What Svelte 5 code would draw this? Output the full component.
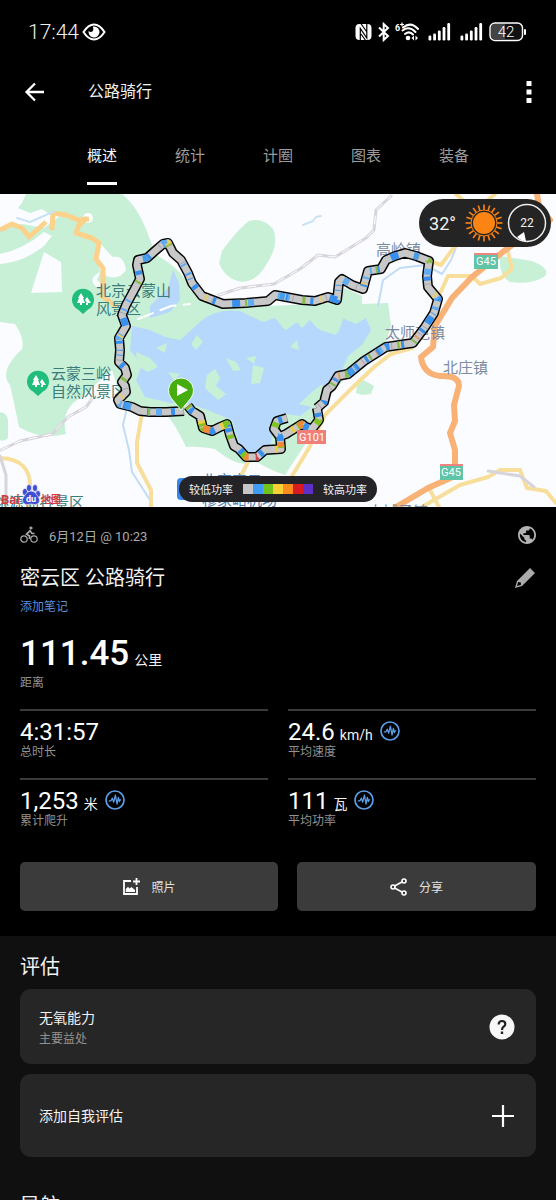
<script>
  const tabs = ['概述', '统计', '计圈', '图表', '装备'];
  let active = $state('概述');

  const legend = ['#c5c5c8', '#3f9cf5', '#71c31c', '#f8d035', '#fb8b1e', '#d91a1e', '#5e2fc9'];

  const stats = [
    { value: '4:31:57', unit: '', label: '总时长', insight: false },
    { value: '24.6', unit: 'km/h', label: '平均速度', insight: true },
    { value: '1,253', unit: '米', label: '累计爬升', insight: true },
    { value: '111', unit: '瓦', label: '平均功率', insight: true }
  ];

  const calmRoute =
    'M184 411L166 412L150 412L140 411L132 407L120 404L118 400L126 392L125 386L122 382L127 375L125 368L119 362L120 350L119 338L126 326L122 315L126 305L133 292L140 279L137 265L138 260L147 258L156 250L163 244L168 243L173 253L181 260L188 273L192 283L202 296L223 304L246 303L268 301L275 295L302 300L315 301L328 297L337 300L339 282L342 279L352 285L363 289L368 271L381 269L386 260L395 256L405 253L416 256L429 261L427 276L428 287L438 299L434 313L425 327L413 343L406 344L386 347L375 354L364 361L348 374L338 376L332 386L327 390L324 402L317 408';
  const busyRoute =
    'M317 408L319 420L312 429L306 427L302 424L286 434L279 437M287 418L277 421L274 429L280 437L281 449L265 450L257 457L246 457L239 449L234 446L230 435L227 424L220 427L212 431L203 428L200 416L192 411L188 406';

  const calmLayers = [
    ['#a6a9af', '1 33 1 49'],
    ['#3790ee', '0 9 4 21 3 17 8 39'],
    ['#62acf2', '0 22 6 26 2 8 2 51'],
    ['#87bc47', '0 34 2 58 3 71'],
    ['#e8cd6c', '0 74 2 66 2 43'],
    ['#469de9', '0 55 5 63 1 4 1 47']
  ];
  const hillLayers = [
    ['#dda064', '0 12 2 31'],
    ['#3992ea', '0 3 3 20'],
    ['#80b951', '0 17 2 29'],
    ['#b39cb8', '0 8 1 24']
  ];
  const busyLayers = [
    ['#3790ee', '0 5 4 18 6 22'],
    ['#7fc422', '0 12 5 19 4 27'],
    ['#f08a35', '0 34 5 37 4 23'],
    ['#eccf44', '0 44 3 31'],
    ['#d24450', '0 67 2 88']
  ];
  const hillRoute = 'M425 327L413 343L406 344L386 347L375 354L364 361L348 374L338 376L332 386L327 390L324 402L317 408';
  const startRoute = 'M230 437L227 424L220 427L212 431L203 428L200 416L192 411L188 406';
</script>

{#snippet pulse()}
  <svg class="pulse" viewBox="0 0 20 20" aria-hidden="true">
    <circle cx="10" cy="10" r="9" fill="none" stroke="#5c9fe8" stroke-width="1.7" />
    <path d="M3.8 10.8H6L7.3 8.2L8.7 12.2L10.4 5.2L12 14L13.4 7.4L14.4 11.6L15.2 9.8H16.2" fill="none" stroke="#5c9fe8" stroke-width="1.3" stroke-linejoin="round" />
  </svg>
{/snippet}

{#snippet pin(x, y)}
  <g transform="translate({x} {y})">
    <path d="M0 14L-5 9.5A11 11 0 1 1 5 9.5Z" fill="#20bd7d" />
    <path d="M-2 -7L-5 -2H-4L-6 3H-3V5H-1V3H2L0 -2H1ZM4 -3L2 0L4 3H3V5H5V3H8L6 0Z" fill="#fff" />
  </g>
{/snippet}

<div class="app">
  <div class="status">
    <span class="clock">17:44</span>
    <svg class="eye" viewBox="0 0 24 18" aria-hidden="true">
      <path d="M1.500 9C5 3.500 8.500 1.500 12 1.500S19 3.500 22.500 9C19 14.500 15.500 16.500 12 16.500S5 14.500 1.500 9Z" fill="none" stroke="#fff" stroke-width="2" />
      <path d="M12 3.500A5.500 5.500 0 1 1 6.600 8Q9 10 10.800 8Q12 6 10.800 3.700Z" fill="#fff" />
    </svg>
    <svg class="signals" viewBox="355 20 172 24" aria-hidden="true">
      <rect x="355.500" y="24" width="16" height="16" rx="4" fill="#fff" />
      <path d="M360.300 41V28.500L366.800 38V23M360.500 23L366.500 31.500M361 34L366 41" fill="none" stroke="#000" stroke-width="1.200" />
      <path d="M379 27.500L388 36L383.700 40V24L388 28L379 36.500" fill="none" stroke="#fff" stroke-width="2" />
      <text x="395" y="31" fill="#fff" font-size="9" font-weight="700">6</text>
      <path d="M400 24.500H404M402 22.500V26.500" stroke="#fff" stroke-width="1.200" />
      <path d="M403 27.500Q411 21 418 29M402.500 30.500Q409 25.500 415.500 32M405 34Q409.500 30.500 413 34.500" fill="none" stroke="#fff" stroke-width="2" stroke-linecap="round" />
      <circle cx="408" cy="38" r="2.300" fill="#fff" />
      <path d="M414 35.500L411.500 38L414 40.500ZM415.500 35.500L418 38L415.500 40.500Z" fill="#fff" />
      {#each [429, 461] as x}
        {#each [5, 7, 10, 13.500, 17.500] as h, i}
          <rect x={x - 0.500 + i * 4.700} y={40.500 - h} width="2.800" height={h} rx="1.200" fill="#fff" />
        {/each}
      {/each}
      <rect x="490" y="23" width="32.500" height="17.500" rx="5" fill="#111" stroke="#fff" stroke-width="1.400" />
      <path d="M495 24H505V39.500H495Q491 39.500 491 35.500V28Q491 24 495 24Z" fill="#444" />
      <rect x="524" y="29" width="2" height="6" rx="1" fill="#fff" />
      <text x="506" y="37" text-anchor="middle" fill="#fff" font-size="15" font-weight="300">42</text>
    </svg>
  </div>

  <header class="bar">
    <button class="icon" aria-label="返回">
      <svg width="22" height="22" viewBox="0 0 22 22"><path d="M20 11H3M11 2.500L2.500 11L11 19.500" fill="none" stroke="#fff" stroke-width="2.300" /></svg>
    </button>
    <h1>公路骑行</h1>
    <button class="icon more" aria-label="更多">
      <svg width="6" height="22" viewBox="0 0 6 22"><path d="M.5 0h5v5h-5zM.5 8.500h5v5h-5zM.5 17h5v5h-5z" fill="#fff" /></svg>
    </button>
  </header>

  <nav class="tabs">
    {#each tabs as tab}
      <button class:active={tab === active} onclick={() => (active = tab)}>{tab}</button>
    {/each}
  </nav>

  <main>
    <section class="map">
      <svg class="canvas" viewBox="0 194 556 313" role="img" aria-label="路线地图">
        <rect y="194" width="556" height="313" fill="#fbfcff" />
        <g fill="#c8f0d6">
          <path d="M0 194H122Q139 208 149 237L156 255Q184 270 190 290L210 305L250 307L330 303L345 288L362 296L362 304L388 303L391 325L384 350L358 368L345 378L320 408L308 440L285 475Q270 470 255 461Q240 470 215 449Q198 446 186 447Q176 425 165 413L123 405L112 370L80 398Q60 410 66 434Q40 440 19 427Q14 402 10 385Q-2 372 22 349Q20 330 0 322Z" />
          <path d="M222 251Q238 229 249 221Q263 217 273 229Q280 244 266 265Q257 281 242 282Q225 279 219 263Z" />
          <path d="M500 256Q520 259 532 261Q552 269 544 277Q530 285 510 282Q498 275 500 256Z" />
          <path d="M0 412Q9 413 8 425V438Q4 442 0 440Z" />
          <path d="M357 384L363 380L369 383L374 386L371 394L362 395L356 393Z" />
        </g>
        <g fill="#fbfcff">
          <path d="M0 194H26L22 203L18 208L30 213L42 209L52 216L60 216L44 228L22 224L0 228Z" />
          <path d="M44 252L61 262L62 292L31 293Z" />
          <path d="M0 254Q24 249 44 232L52 236L44 246Q24 262 0 264Z" />
          <circle cx="88" cy="218" r="5" />
          <path d="M96 238L106 250L113 257Q124 255 126 270Q119 281 106 276L101 270L97 280L110 292L95 286Q88 278 100 272Z" />
          <path d="M0 322L15 324Q25 338 22 350L0 350Z" />
        </g>
        <path d="M150 306L168 288L173 270L179 283L180 300L170 312L150 318Z" fill="#b7d8fb" />
        <path d="M132 326L150 330L165 337L180 340L200 322Q215 308 240 311L263 322L275 318L285 330L310 312L320 330L336 335L342 318L356 324L366 318L371 330L362 345L348 356L340 375L324 390L316 404L300 416L285 414L273 430L270 448L252 455L239 444L232 420L205 409L190 404L170 403L145 397L136 380L142 365L130 350Z" fill="#b7d8fd" />
        <g fill="#c8f0d6">
          <path d="M187 331L200 318L196 305L182 307L172 322L180 334ZM283 307L286 330L297 322L302 328L310 320L318 329L330 322L338 333L346 311ZM197 335L203 342L196 350L191 344ZM290 347L297 340L299 350ZM136 352L150 358L158 367L148 372L138 366Z" />
          <path d="M207 375L215 369L220 378L216 386L226 394L218 400L205 388ZM226 358L236 362L241 370L233 371ZM253 365L264 368L260 383L251 384ZM246 358L256 356L254 364ZM156 348L167 343L165 353ZM168 372L180 374L174 380ZM299 404L312 392L322 384L326 394L316 408Z" />
        </g>
        <path d="M0 230L12 224L22 228L29 237L46 222M52 230L53 213L66 215L78 220L89 219M87 218L79 225L76 233L92 238L99 243L96 259L103 268V297L117 307" fill="none" stroke="#fbd18b" stroke-width="5" stroke-linejoin="round" />
        <g fill="none" stroke-linecap="round" stroke-linejoin="round">
          <path d="M17 218L30 222L55 211M303 225L313 221L316 217L321 216" stroke="#c9e3f6" stroke-width="2" />
          <path d="M378 306L383 280L400 268L425 265L442 274L451 260L459 240M126 412L123 425L129 450L132 472L150 500" stroke="#c2dcf6" stroke-width="2" />
          <path d="M430 261L441 265L455 246L463 235M456 194L475 211L495 194M437 300L448 276H472L480 284L501 278L512 269L508 252M248 462L240 478M142 413L137 442V463L151 490V507M0 458Q32 459 30 490V507M412 348L391 354L374 367L350 390L325 415L309 448L292 476M422 507L460 485L488 477L500 470H520L527 488L546 491L556 503M430 490L439 507" stroke="#f7df9b" stroke-width="4" />
          <path d="M537 194L539 206L550 220L530 232L504 251L472 277L452 298L435 326L433 347L421 357Q423 374 440 376Q459 375 459 386L454 405L455 421L450 433L455 450V476L428 488L396 507" stroke="#f8b276" stroke-width="6" />
          <path d="M219 295L240 288L274 284L300 269L318 255L335 257L366 238L374 230L376 210L391 196M1 450L20 441L52 434L68 417L86 407L92 399M0 456L6 475V507M488 471L520 476L534 487" stroke="#d7d5db" stroke-width="3" />
          <path d="M219 295L240 288L274 284L300 269L318 255L335 257L366 238L374 230L376 210L391 196M1 450L20 441L52 434L68 417L86 407L92 399" stroke="#fff" stroke-width="1" stroke-dasharray="8 7" />
          <path d="M138 319L171 306L190 304" stroke="#fff" stroke-width="2" stroke-dasharray="16 8" />
        </g>

        {@render pin(83, 300)}
        {@render pin(38, 382)}
        <g font-size="15" fill="#397c7a">
          <text x="96" y="296">北京云蒙山</text>
          <text x="96" y="314">风景区</text>
          <text x="51" y="379">云蒙三峪</text>
          <text x="51" y="397">自然风景区</text>
          <text x="-6" y="508">桃源仙谷景区</text>
        </g>
        <g font-size="15" fill="#7c8ba0">
          <text x="376" y="255">高岭镇</text>
          <text x="385" y="338">太师屯镇</text>
          <text x="443" y="373">北庄镇</text>
          <text x="368" y="517">大城子镇</text>
        </g>
        <g font-size="15" fill="#4d7ab2">
          <text x="202" y="486">北京密云</text>
          <text x="202" y="505">穆家峪机场</text>
        </g>
        <rect x="177" y="478" width="22" height="22" rx="4" fill="#3686e8" />

        <g fill="none" stroke-linejoin="round">
          <g stroke="#050505" stroke-width="10">
            <path d={calmRoute} />
            <path d={busyRoute} />
          </g>
          <g stroke="#c9c8c9" stroke-width="7">
            <path d={calmRoute} />
            <path d={busyRoute} />
          </g>
          <g stroke-width="7">
            {#each calmLayers as [color, dash]}<path d={calmRoute} stroke={color} stroke-dasharray={dash} />{/each}
            {#each hillLayers as [color, dash]}<path d={hillRoute} stroke={color} stroke-dasharray={dash} />{/each}
            {#each busyLayers as [color, dash]}
              <path d={busyRoute} stroke={color} stroke-dasharray={dash} />
              <path d={startRoute} stroke={color} stroke-dasharray={dash} />
            {/each}
          </g>
        </g>
        <path d="M181 410L171 398A12.500 12.500 0 1 1 191 398Z" fill="#46ad10" stroke="#f4fff0" stroke-width="1" />
        <path d="M177 384V396L188 390Z" fill="#fff" />

        <g font-size="11" fill="#fff" text-anchor="middle">
          <rect x="474" y="253" width="24" height="16" fill="#60c4a7" />
          <rect x="474" y="253" width="24" height="2" fill="#ee8581" />
          <text x="486" y="265">G45</text>
          <rect x="440" y="464" width="23" height="16" fill="#60c4a7" />
          <rect x="440" y="464" width="23" height="2" fill="#ee8581" />
          <text x="451" y="476">G45</text>
          <rect x="297" y="430" width="29" height="14" fill="#f17f78" />
          <text x="312" y="441">G101</text>
        </g>

        <g fill="#3f4ed0" stroke="#fff" stroke-width=".6">
          <ellipse cx="25" cy="492" rx="2.600" ry="3.600" />
          <ellipse cx="29" cy="488" rx="2.500" ry="3.500" />
          <ellipse cx="35" cy="488" rx="2.500" ry="3.500" />
          <ellipse cx="38" cy="494" rx="2.500" ry="3.400" />
          <path d="M31 491Q35 491 37 495Q41 499 39 503Q36 506 31 504Q26 506 23 503Q21 499 25 495Q27 491 31 491Z" />
        </g>
        <text x="31" y="502" font-size="9" font-weight="700" fill="#fff" text-anchor="middle">du</text>
        <g font-size="13" font-weight="700" fill="#d93b43">
          <text x="1" y="504">Bai</text>
          <text x="41" y="503" font-size="10">地图</text>
        </g>
      </svg>

      <div class="weather">
        <span class="temp">32°</span>
        <svg width="38" height="38" viewBox="-19 -19 38 38" aria-hidden="true">
          <circle r="11" fill="#fc8415" />
          <circle r="13" fill="none" stroke="#fc8415" stroke-width="1" />
          {#each Array(20) as _, i}
            <path d="M0 -13V-18.500" stroke="#fc8415" stroke-width="1.600" transform="rotate({i * 18})" />
          {/each}
        </svg>
        <div class="wind">
          <svg width="40" height="40" viewBox="-20 -20 40 40" aria-hidden="true">
            <circle r="18.500" fill="none" stroke="#eee" stroke-width="1.500" />
            <path d="M-10 14L-3 9L-1 18Q-6 18 -10 14Z" fill="#fff" />
          </svg>
          <span>22</span>
        </div>
      </div>

      <div class="legend">
        <span>较低功率</span>
        <div class="scale">
          {#each legend as color}<i style:background={color}></i>{/each}
        </div>
        <span>较高功率</span>
      </div>
    </section>

    <section class="details">
      <div class="row meta">
        <svg width="18" height="18" viewBox="0 0 18 18" fill="none" stroke="#aaa" stroke-width="1.200" aria-hidden="true">
          <circle cx="4" cy="13" r="3.200" /><circle cx="14" cy="13" r="3.200" />
          <circle cx="11" cy="2" r="1" fill="#aaa" />
          <path d="M9.500 13V10L6.500 8.200L10 4.800L12 7.500H14.500" stroke-width="1.700" />
        </svg>
        <span>6月12日 @ 10:23</span>
        <button class="icon end" aria-label="隐私设置">
          <svg width="18" height="18" viewBox="2 2 20 20"><path fill="#b3b3b3" d="M12 2C6.480 2 2 6.480 2 12s4.480 10 10 10 10-4.480 10-10S17.520 2 12 2zm-1 17.930c-3.950-.49-7-3.850-7-7.930 0-.62.080-1.210.210-1.790L9 15v1c0 1.100.9 2 2 2v1.930zm6.900-2.540c-.26-.81-1-1.390-1.900-1.390h-1v-3c0-.55-.45-1-1-1H8v-2h2c.55 0 1-.45 1-1V7h2c1.100 0 2-.9 2-2v-.41c2.930 1.190 5 4.060 5 7.410 0 2.080-.8 3.970-2.100 5.390z" /></svg>
        </button>
      </div>
      <div class="row name">
        <h2>密云区 公路骑行</h2>
        <button class="icon end" aria-label="编辑名称">
          <svg width="22" height="22" viewBox="0 0 22 22"><path d="M1 21L3 14L16 1L21 6L8 19ZM4.200 15L3 19L7 17.800L6.800 15.500Z" fill="#aaa" fill-rule="evenodd" /></svg>
        </button>
      </div>
      <a class="note" href="#notes">添加笔记</a>

      <div class="distance"><strong>111.45</strong><span>公里</span></div>
      <div class="label">距离</div>

      <div class="stats">
        {#each stats as s}
          <div class="stat">
            <div class="value">
              <b>{s.value}</b>
              {#if s.unit}<span>{s.unit}</span>{/if}
              {#if s.insight}{@render pulse()}{/if}
            </div>
            <div class="label">{s.label}</div>
          </div>
        {/each}
      </div>

      <div class="actions">
        <button>
          <svg width="18" height="18" viewBox="0 0 18 18" aria-hidden="true">
            <path d="M9 3H2V16H15V9M14.500 0V7M11 3.500H18" fill="none" stroke="#fff" stroke-width="1.800" />
            <path d="M3.800 14V11L6 8.800L7.500 10.500L9.500 9L13 12V14Z" fill="#fff" />
          </svg>
          照片
        </button>
        <button>
          <svg width="18" height="18" viewBox="0 0 18 18" fill="none" stroke="#fff" stroke-width="1.600" aria-hidden="true">
            <path d="M4.500 8L12 4M4.500 10L12 14" /><circle cx="3" cy="9" r="2" /><circle cx="14" cy="3" r="2" /><circle cx="14" cy="15" r="2" />
          </svg>
          分享
        </button>
      </div>
    </section>

    <section class="review">
      <h2>评估</h2>
      <div class="card">
        <div>
          <div class="title">无氧能力</div>
          <div class="label">主要益处</div>
        </div>
        <button class="icon end" aria-label="帮助">
          <svg width="26" height="26" viewBox="0 0 26 26"><circle cx="13" cy="13" r="12.500" fill="#f7f7f7" /><path d="M9.700 10.500Q9.700 7 13 7Q16.300 7 16.300 10Q16.300 11.500 14.700 12.700Q13 14 13 16" fill="none" stroke="#222" stroke-width="2.200" /><path d="M11.800 17.500h2.400v2.500h-2.400z" fill="#222" /></svg>
        </button>
      </div>
      <button class="card add">
        <span class="title">添加自我评估</span>
        <svg class="end" width="24" height="24" viewBox="0 0 24 24" aria-hidden="true"><path d="M12 1V23M1 12H23" stroke="#fff" stroke-width="2.200" /></svg>
      </button>
      <h2 class="next">导航</h2>
    </section>
  </main>
</div>

<style>
  :global(body) { margin: 0; background: #000; }
  .app {
    height: 100vh;
    display: flex;
    flex-direction: column;
    background: #000;
    color: #f2f2f2;
    font-family: Roboto, "Noto Sans CJK SC", sans-serif;
  }
  svg { display: block; flex: none; }
  h1, h2 { margin: 0; font-weight: 400; }
  button { font: inherit; color: inherit; background: none; border: 0; padding: 0; cursor: pointer; }
  .icon { display: block; flex: none; }
  .end { margin-left: auto; }

  .status { flex: none; display: flex; align-items: center; height: 64px; padding: 0 29px 0 28px; }
  .clock { font-size: 21px; font-weight: 300; }
  .eye { width: 24px; height: 18px; margin-left: 3px; }
  .signals { width: 172px; height: 24px; margin-left: auto; }

  .bar { flex: none; display: flex; align-items: center; height: 56px; padding: 0 24px; }
  .bar h1 { margin-left: 42px; font-size: 16px; line-height: 24px; }
  .more { margin-left: auto; }

  .tabs { flex: none; display: flex; gap: 58px; padding: 22px 0 9px 87px; height: 43px; }
  .tabs button { box-sizing: border-box; height: 43px; padding-bottom: 12px; font-size: 15px; line-height: 28px; color: #9c9c9c; border-bottom: 3px solid transparent; }
  .tabs button.active { color: #f5f5f5; border-color: #fff; }

  main { flex: 1; min-height: 0; overflow-y: auto; scrollbar-width: none; }

  .map { position: relative; overflow: hidden; }
  .canvas { width: 100%; height: auto; }
  .weather {
    position: absolute; top: 5px; right: 5px; display: flex; align-items: center;
    box-sizing: border-box; height: 48px; padding: 0 4px 0 10px; gap: 9px; border-radius: 24px; background: #242424;
  }
  .temp { font-size: 18px; }
  .wind { display: grid; place-items: center; margin-left: -5px; }
  .wind > * { grid-area: 1 / 1; }
  .wind span { font-size: 12px; }
  .legend {
    position: absolute; bottom: 5px; left: 50%; transform: translateX(-50%);
    display: flex; align-items: center; gap: 10px; height: 26px; padding: 0 10px;
    border-radius: 13px; background: #242428; font-size: 11px; white-space: nowrap;
  }
  .scale { display: flex; }
  .scale i { width: 10px; height: 10px; }

  .details { padding: 18px 20px 25px; }
  .row { display: flex; align-items: center; }
  .meta { height: 20px; gap: 11px; font-size: 13px; color: #aaa; }
  .name { height: 30px; margin-top: 18px; }
  .name h2 { font-size: 20px; line-height: 30px; }
  .note { display: block; margin-top: 5px; font-size: 12px; line-height: 18px; color: #5b8fd9; text-decoration: none; }
  .distance { display: flex; align-items: baseline; gap: 5px; margin-top: 18px; line-height: 40px; font-size: 14px; }
  .distance strong { font-size: 35px; font-weight: 500; color: #fff; }
  .distance span { line-height: 20px; }
  .label { font-size: 12px; line-height: 18px; color: #929292; }

  .stats { display: grid; grid-template-columns: 1fr 1fr; column-gap: 20px; margin-top: 17px; }
  .stat { box-sizing: border-box; height: 69px; padding-top: 6px; border-top: 2px solid #3a3a3a; }
  .value { display: flex; align-items: baseline; gap: 5px; height: 26px; line-height: 30px; font-size: 14px; }
  .value b { font-size: 24px; font-weight: 400; color: #fff; }
  .value span { line-height: 20px; }
  .pulse { width: 20px; height: 20px; margin: 4px 0 0 2px; align-self: flex-start; }

  .actions { display: grid; grid-template-columns: 259fr 240fr; gap: 19px; margin-top: 15px; }
  .actions button { display: flex; align-items: center; justify-content: center; gap: 11px; height: 49px; border-radius: 5px; background: #3b3b3b; font-size: 12px; color: #e2e2e2; }

  .review { padding: 16px 20px; background: #101010; }
  .review h2 { font-size: 20px; line-height: 30px; }
  .card { box-sizing: border-box; display: flex; align-items: center; width: 100%; margin-top: 7px; min-height: 75px; padding: 0 21px 0 19px; border-radius: 11px; background: #262626; text-align: left; }
  .card .title { font-size: 14px; line-height: 24px; }
  .add { margin-top: 10px; min-height: 83px; }
  .review .next { margin-top: 34px; }
</style>
